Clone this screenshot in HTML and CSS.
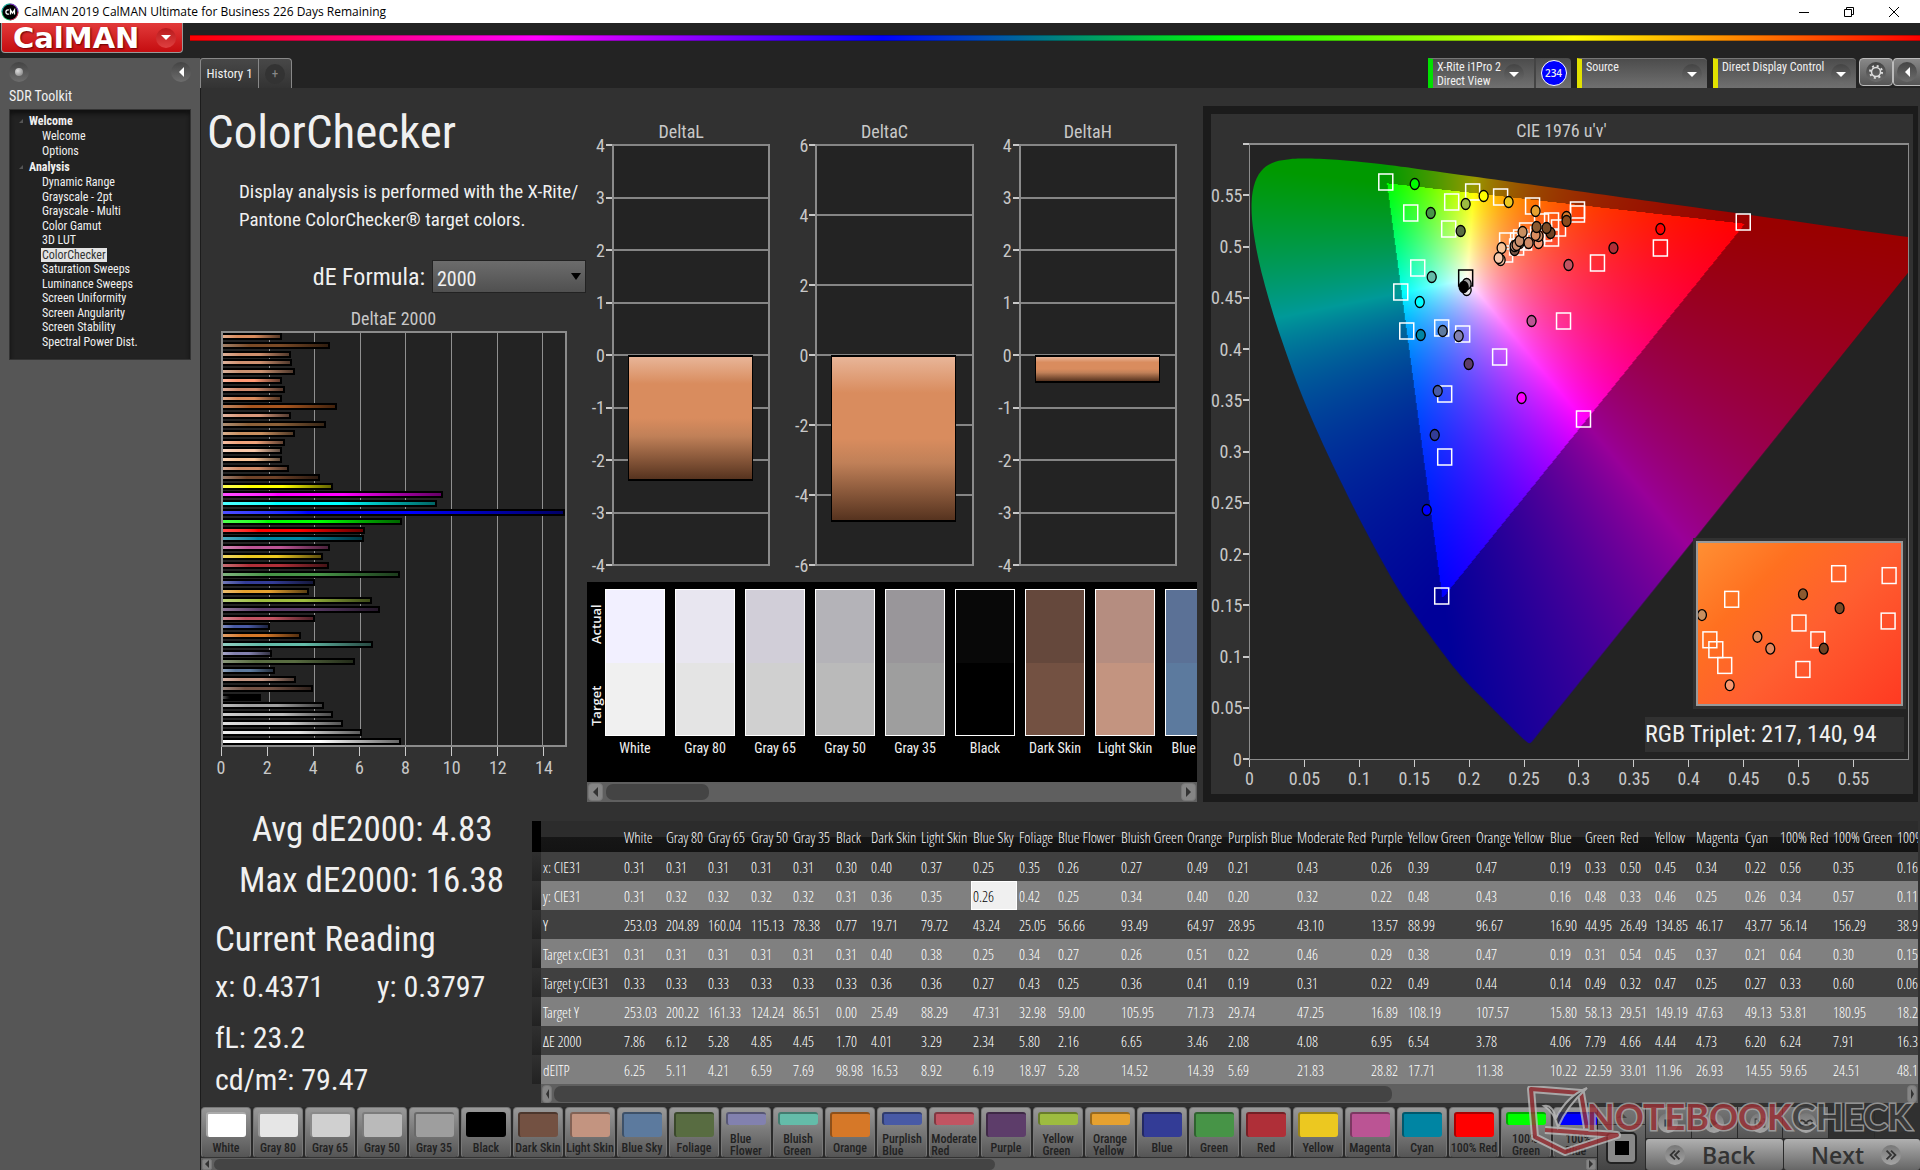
FILE: index.html
```html
<!DOCTYPE html>
<html lang="en">
<head>
<meta charset="utf-8">
<title>CalMAN 2019 CalMAN Ultimate for Business</title>
<link rel="stylesheet" href="styles.css">
</head>
<body>
<header class="titlebar">
  <svg class="app-icon" viewBox="0 0 18 18" aria-hidden="true"><circle cx="9" cy="9" r="8.500" fill="#2b6"/><path d="M9 .5A8.500 8.500 0 0 1 17.500 9L9 9z" fill="#83c"/><path d="M.5 9A8.500 8.500 0 0 1 9 .5V9z" fill="#2aa"/><path d="M17.500 9A8.500 8.500 0 0 1 9 17.500V9z" fill="#c25"/><circle cx="9" cy="9" r="7.500" fill="#000"/><path d="M8 7a2.200 2.200 0 1 0 0 4M9.500 11.500V7l2 3 2-3v4.500" fill="none" stroke="#fff" stroke-width="1.300"/></svg>
  <span class="titlebar-text">CalMAN 2019 CalMAN Ultimate for Business 226 Days Remaining</span>
  <div class="window-buttons">
    <button type="button" aria-label="Minimize"><svg viewBox="0 0 12 12"><path d="M1 6.500h10"/></svg></button>
    <button type="button" aria-label="Restore"><svg viewBox="0 0 12 12"><path d="M1.500 3.500h7v7h-7zM3.500 3.500v-2h7v7h-2"/></svg></button>
    <button type="button" aria-label="Close"><svg viewBox="0 0 12 12"><path d="M1 1l10 10M11 1L1 11"/></svg></button>
  </div>
</header>
<div class="brandbar">
  <button type="button" class="brand">CalMAN<span class="round red"><i class="tri-down"></i></span></button>
  <div class="rainbow"></div>
</div>
<div class="shell">
  <aside class="sidebar">
    <div class="sidebar-tools"><span class="round"><i class="knob"></i></span><button type="button" class="round" aria-label="Collapse"><i class="tri-left"></i></button></div>
    <h2>SDR Toolkit</h2>
    <nav class="tree">
      <h3>Welcome</h3>
      <ul><li><a href="#">Welcome</a></li><li><a href="#">Options</a></li></ul>
      <h3>Analysis</h3>
      <ul>
        <li><a href="#">Dynamic Range</a></li><li><a href="#">Grayscale - 2pt</a></li><li><a href="#">Grayscale - Multi</a></li><li><a href="#">Color Gamut</a></li><li><a href="#">3D LUT</a></li><li><a href="#" class="current">ColorChecker</a></li><li><a href="#">Saturation Sweeps</a></li><li><a href="#">Luminance Sweeps</a></li><li><a href="#">Screen Uniformity</a></li><li><a href="#">Screen Angularity</a></li><li><a href="#">Screen Stability</a></li><li><a href="#">Spectral Power Dist.</a></li>
      </ul>
    </nav>
  </aside>
  <div class="workspace">
    <div class="tabbar">
      <div class="tabs"><button type="button" class="tab">History 1</button><button type="button" class="tab add" aria-label="Add tab"><span class="round dark">+</span></button></div>
      <div class="devices">
        <button type="button" class="device green meter"><span>X-Rite i1Pro 2<br>Direct View</span><span class="round"><i class="tri-down"></i></span></button>
        <span class="badge-cell"><b class="badge">234</b></span>
        <button type="button" class="device yellow source"><span>Source</span><span class="round"><i class="tri-down"></i></span></button>
        <button type="button" class="device yellow display"><span>Direct Display Control</span><span class="round"><i class="tri-down"></i></span></button>
        <div class="device-tools">
          <button type="button" aria-label="Settings"><span class="round"><svg viewBox="0 0 16 16"><circle cx="8" cy="8" r="4.500" fill="none" stroke="#ddd" stroke-width="1.500"/><circle cx="8" cy="8" r="6" fill="none" stroke="#ddd" stroke-width="2" stroke-dasharray="2 2.712"/></svg></span></button>
          <button type="button" aria-label="Collapse panel"><span class="round"><i class="tri-left"></i></span></button>
        </div>
      </div>
    </div>
    <main class="content">
      <div class="upper">
        <section class="intro">
          <h1>ColorChecker</h1>
          <p class="lead">Display analysis is performed with the X-Rite/<br>Pantone ColorChecker® target colors.</p>
          <div class="formula"><label for="de">dE Formula:</label><span class="select"><select id="de"><option>2000</option></select></span></div>
          <h4 class="chart-title">DeltaE 2000</h4>
          <div class="de-plot"><div class="de-grid" id="de-grid"></div><div class="de-bars" id="de-bars"></div></div>
          <div class="de-axis" id="de-axis"></div>
        </section>
        <section class="middle">
          <div class="deltas" id="deltas"></div>
          <div class="strip">
            <div class="strip-sides"><span>Actual</span><span>Target</span></div>
            <div class="strip-items" id="strip"></div>
          </div>
          <div class="scrollbar strip-scroll"><button type="button" aria-label="Scroll left"><i class="tri-left"></i></button><div class="track"><div class="thumb"></div></div><button type="button" aria-label="Scroll right"><i class="tri-right"></i></button></div>
        </section>
        <section class="cie">
          <h4 class="chart-title">CIE 1976 u'v'</h4>
          <div class="cie-body">
            <div class="yaxis" id="cie-y"></div>
            <div class="cie-plot">
              <canvas id="cie-canvas" width="659" height="614"></canvas>
              <svg id="cie-marks" viewBox="0 0 659 614" preserveAspectRatio="none"></svg>
              <div class="inset"><svg id="inset-marks" viewBox="0 0 205 163" preserveAspectRatio="none"></svg></div>
              <div class="triplet">RGB Triplet: 217, 140, 94</div>
            </div>
          </div>
          <div class="xaxis" id="cie-x"></div>
        </section>
      </div>
      <div class="lower">
        <section class="readings">
          <p class="big avg">Avg dE2000: 4.83</p>
          <p class="big max">Max dE2000: 16.38</p>
          <p class="big">Current Reading</p>
          <p class="xy"><span>x: 0.4371</span><span>y: 0.3797</span></p>
          <p class="fl">fL: 23.2</p>
          <p class="cd">cd/m²: 79.47</p>
        </section>
        <section class="data">
          <div class="table-box"><table id="table"></table></div>
          <div class="scrollbar table-scroll"><button type="button" aria-label="Scroll left"><i class="tri-left"></i></button><div class="track"><div class="thumb"></div></div><button type="button" aria-label="Scroll right"><i class="tri-right"></i></button></div>
        </section>
      </div>
      <footer class="toolbar">
        <div class="palette-box">
          <div class="palette" id="palette"></div>
          <div class="scrollbar palette-scroll"><button type="button" aria-label="Scroll left"><i class="tri-left"></i></button><div class="track"><div class="thumb"></div></div><button type="button" aria-label="Scroll right"><i class="tri-right"></i></button></div>
        </div>
        <div class="pattern"><button type="button" class="up" aria-label="Show patterns"><i class="tri-up"></i></button><button type="button" class="window" aria-label="Pattern window"><i></i></button></div>
        <div class="controls">
          <div class="media">
            <button type="button" aria-label="Stop"><span class="round light"><svg viewBox="0 0 18 18"><path d="M5 5h8v8H5z"/></svg></span></button>
            <button type="button" aria-label="Play"><span class="round light"><svg viewBox="0 0 18 18"><path d="M5 4l9 5-9 5z"/></svg></span></button>
            <button type="button" aria-label="Step"><span class="round light"><svg viewBox="0 0 18 18"><path d="M3 4h3v1H4v8h2v1H3zM15 4h-3v1h2v8h-2v1h3zM7 6l5 3-5 3z"/></svg></span></button>
            <button type="button" aria-label="Loop"><span class="round light"><svg viewBox="0 0 18 18"><path d="M9 9C5 4 2 6 2 9s3 5 7 0 7-3 7 0-3 5-7 0z" fill="none" stroke="#333" stroke-width="2"/></svg></span></button>
            <button type="button" class="off" aria-label="Refresh"><span class="round dark"><svg viewBox="0 0 18 18"><path d="M4 9a5 5 0 0 1 9-3M14 9a5 5 0 0 1-9 3" fill="none" stroke="#222" stroke-width="2"/></svg></span></button>
            <button type="button" class="off" aria-label="More"><span class="round dark"></span></button>
          </div>
          <div class="nav">
            <button type="button" class="back"><span class="round light"><svg viewBox="0 0 18 18"><path d="M9 4L4 9l5 5M14 4L9 9l5 5" class="chev"/></svg></span><span>Back</span></button>
            <button type="button" class="next"><span>Next</span><span class="round light"><svg viewBox="0 0 18 18"><path d="M9 4l5 5-5 5M4 4l5 5-5 5" class="chev"/></svg></span></button>
          </div>
        </div>
        <div class="watermark">
          <svg viewBox="0 0 96 72" aria-hidden="true">
            <g fill="none" stroke-linejoin="round"><path d="M60 42L54 7 4 3 8 51 38 66 90 49 18 44" stroke="#bbb" stroke-width="8"/><path d="M60 42L54 7 4 3 8 51 38 66 90 49 18 44" stroke="#9c3136" stroke-width="4"/></g>
            <path d="M17 20q8-2 12 12Q40 10 60 2q-20 18-29 39-4-15-14-21z" fill="#3a3a3a" stroke="#bbb" stroke-width="2"/>
          </svg>
          <span class="wm-red">NOTEBOOK</span><span class="wm-dark">CHECK</span>
        </div>
      </footer>
    </main>
  </div>
</div>
<script src="app.js"></script>
</body>
</html>
```

FILE: styles.css
```css
* { box-sizing: border-box; }
body {
  margin: 0;
  min-height: 100vh;
  display: flex;
  flex-direction: column;
  background: #232323;
  color: #f0f0f0;
  font-family: "Roboto Condensed", Roboto, "Liberation Sans", sans-serif;
  font-size: 13px;
  overflow-x: hidden;
}
h1, h2, h3, h4, p, ul { margin: 0; padding: 0; font-weight: 400; }
ul { list-style: none; }
a { color: inherit; text-decoration: none; }
button { font: inherit; color: inherit; border: 0; padding: 0; margin: 0; background: none; }
svg { display: block; }

/* Small shapes */
.tri-down, .tri-left, .tri-right, .tri-up { width: 0; height: 0; border: 5px solid transparent; }
.tri-down { border-top-color: #fff; border-bottom: 0; }
.tri-up { border-bottom-color: #444; border-top: 0; }
.tri-left { border-right-color: #fff; border-left: 0; }
.tri-right { border-left-color: #333; border-right: 0; }
.round {
  display: flex;
  align-items: center;
  justify-content: center;
  flex: none;
  width: 20px;
  height: 20px;
  border-radius: 50%;
  background: linear-gradient(#444, #6d6d6d);
}
.round svg { width: 16px; height: 16px; }
.round.red { background: linear-gradient(#b81a1c, #e04040); }
.round.dark { background: #333; color: #888; }
.round.light { background: linear-gradient(#777, #a5a5a5); }
.knob { width: 8px; height: 8px; border-radius: 50%; background: radial-gradient(circle at 35% 35%, #ddd, #777); }

/* Window title */
.titlebar { display: flex; align-items: center; height: 23px; background: #fff; color: #000; padding: 0 4px 0 1px; }
.app-icon { width: 18px; height: 18px; }
.titlebar-text { margin-left: 5px; font: 12px/20px "Open Sans", sans-serif; }
.window-buttons { display: flex; margin-left: auto; }
.window-buttons button { width: 45px; height: 20px; display: flex; align-items: center; justify-content: center; }
.window-buttons svg { width: 12px; height: 12px; fill: none; stroke: #000; }

.brandbar { display: flex; height: 35px; }
.brand {
  display: flex;
  align-items: center;
  justify-content: space-between;
  width: 182px;
  height: 30px;
  padding: 0 6px 0 11px;
  margin-left: 1px;
  border: 1px solid #999;
  border-top: 0;
  border-radius: 0 0 4px 4px;
  background: linear-gradient(#e23a3a, #c50d10);
  font: 700 29px/28px "DejaVu Sans", sans-serif;
  color: #fff;
  text-shadow: 1px 1px 2px #600;
}
.rainbow { flex: 1; height: 6px; margin: 12px 0 0 7px; background: linear-gradient(90deg, #f00, #f0f, #00f, #0f0, #ff0, #f00); border: solid #0004; border-width: 1px 0; }

.shell { flex: 1; display: flex; }
.sidebar { width: 200px; flex: none; background: #565656; padding: 4px 9px; }
.sidebar-tools { display: flex; justify-content: space-between; }
.sidebar h2 { font-size: 14px; line-height: 20px; margin-top: 4px; height: 23px; }
.tree { background: #222; border: 1px solid #333; padding: 2px 0 8px; height: 251px; box-shadow: inset 0 4px 4px #111; }
.tree h3 { font-weight: 700; font-size: 12px; line-height: 16px; padding-left: 19px; position: relative; margin-top: 1px; }
.tree h3::before { content: ""; position: absolute; left: 9px; top: 6px; border: 2px solid #555; border-top-color: transparent; border-left-color: transparent; }
.tree li { height: 15px; line-height: 14px; padding-left: 32px; font-size: 12px; }
.tree li:nth-child(even) { height: 14px; }
.tree .current { display: inline-block; padding: 0 1px; margin-left: -1px; background: #e3e3e3; color: #333; }

.workspace { flex: 1; min-width: 0; display: flex; flex-direction: column; }
.tabbar { display: flex; justify-content: space-between; height: 30px; }
.tabs { display: flex; }
.tab { width: 59px; background: linear-gradient(#484848, #333); border: 1px solid #888; border-bottom: 0; font-size: 13px; border-radius: 3px 0 0 0; }
.tab.add { width: 34px; margin-left: -1px; display: flex; align-items: center; justify-content: center; border-radius: 0 4px 0 0; }
.devices { display: flex; }
.device { display: flex; justify-content: space-between; align-items: flex-start; text-align: left; font-size: 12px; line-height: 14px; white-space: nowrap; padding: 1px 5px 0 4px; border-left: 5px solid #e2e200; background: linear-gradient(#4c4c4c, #707070); border-top: 1px solid #777; }
.device .round { margin-top: 4px; }
.device.green { border-left-color: #00e000; }
.meter { width: 106px; padding-right: 10px; }
.source { width: 130px; margin-left: 6px; border-radius: 0 4px 0 0; }
.display { width: 143px; margin-left: 6px; border-radius: 0 4px 0 0; }
.badge-cell { width: 37px; border-left: 2px solid #444; background: linear-gradient(#4c4c4c, #707070); border-radius: 0 4px 0 0; display: flex; align-items: center; justify-content: center; }
.badge { width: 26px; height: 26px; border-radius: 50%; border: 1px solid #fff; background: #00f; font: 600 10px/24px "Open Sans", sans-serif; text-align: center; }
.device-tools { display: flex; margin-left: 3px; }
.device-tools button { width: 34px; height: 28px; border: 1px solid #bbb; border-radius: 4px; background: linear-gradient(#888, #555); display: flex; align-items: center; justify-content: center; }
.device-tools button:last-child { width: 27px; border-right: 0; border-radius: 4px 0 0 4px; }

.content { flex: 1; display: flex; flex-direction: column; background: #313131; border-left: 1px solid #1c1c1c; min-width: 0; }
.upper { flex: 1; display: grid; grid-template-columns: minmax(0, 386fr) minmax(0, 610fr) minmax(0, 723fr); }
.chart-title { font-size: 18px; line-height: 24px; text-align: center; color: #c8c8c8; }

/* Left column */
.intro { display: flex; flex-direction: column; padding: 14px 0 0 20px; }
.intro h1 { font-size: 47px; line-height: 60px; margin-left: -14px; }
.lead { margin: 16px 0 0 18px; font-size: 19px; line-height: 28px; white-space: nowrap; }
.formula { display: flex; justify-content: flex-end; align-items: center; margin: 26px 1px 0 0; gap: 7px; font-size: 24px; }
.select { position: relative; width: 154px; }
.select::after { content: ""; position: absolute; right: 5px; top: 13px; border: 5px solid transparent; border-top: 7px solid #000; border-bottom: 0; pointer-events: none; }
.select select { appearance: none; display: block; width: 100%; height: 33px; padding: 4px 4px 0; border: 1px solid #222; border-radius: 0; background: linear-gradient(#6c6c6c, #505050); color: #f0f0f0; font: inherit; font-size: 20px; line-height: 24px; }
.intro .chart-title { margin: 14px 21px 0 0; }
.de-plot { flex: 1; min-height: 300px; margin-right: 20px; display: grid; border: 2px solid #8b8b8b; background: #232323; }
.de-grid, .de-bars { grid-area: 1 / 1; }
.de-grid { display: grid; grid-template-columns: repeat(7, 2fr) 1fr; }
.de-grid i + i { border-left: 1px solid #909090; }
.de-bars { display: flex; flex-direction: column; justify-content: space-between; z-index: 1; }
.de-bars i { height: 7px; border: solid #000; border-width: 2px 2px 2px 0; }
.de-axis { display: grid; grid-template-columns: repeat(7, 2fr) 1fr; height: 59px; margin: 0 21px 0 -1px; font-size: 18px; line-height: 24px; color: #c8c8c8; }
.de-axis span { display: flex; flex-direction: column; align-items: center; width: 2px; }
.de-axis span::before { content: ""; width: 1px; height: 9px; flex: none; background: #ccc; }

/* Delta charts */
.middle { display: flex; flex-direction: column; padding-bottom: 4px; min-width: 0; }
.deltas { flex: 1; display: grid; grid-template-columns: repeat(3, 1fr); padding: 32px 0 16px; }
.delta { display: flex; flex-direction: column; padding-right: 20px; }
.delta .chart-title { margin-left: 5px; }
.delta-body { flex: 1; display: flex; }
.yaxis { display: flex; flex-direction: column; justify-content: space-between; color: #c8c8c8; font-size: 18px; }
.yaxis span { display: flex; align-items: center; justify-content: flex-end; height: 2px; gap: 1px; white-space: nowrap; }
.yaxis span::after { content: ""; width: 6px; height: 2px; background: #c8c8c8; }
.delta .yaxis { width: 25px; }
.delta-plot { flex: 1; position: relative; display: flex; flex-direction: column; justify-content: space-between; background: #232323; border: solid #8b8b8b; border-width: 0 2px; }
.delta-plot i { height: 2px; background: #858585; }
.delta-bar { position: absolute; left: 9%; right: 10%; top: 50%; border: 1px solid #000; border-width: 2px 1px; background: linear-gradient(#e8b598, #d98c5e 22%, #d98c5e 50%, #c08058 65%, #56331f); }

.strip { display: flex; height: 200px; background: #000; overflow: hidden; }
.strip-sides { flex: none; width: 18px; display: flex; flex-direction: column; padding-top: 4px; font: 600 13px/18px "Open Sans", sans-serif; }
.strip-sides span { writing-mode: vertical-rl; transform: rotate(180deg); height: 77px; text-align: center; }
.strip-sides span + span { margin-top: 4px; }
.strip-items { display: flex; gap: 10px; padding: 7px 0 0; }
.strip-item { width: 60px; flex: none; text-align: center; font-size: 14px; line-height: 24px; white-space: nowrap; }
.strip-item div { height: 147px; border: 1px solid #fff; display: flex; flex-direction: column; }
.strip-item div i { flex: 1; }

.scrollbar { display: flex; align-items: center; height: 20px; padding: 0 1px; gap: 3px; background: #5f5f5f; }
.scrollbar button { width: 15px; height: 18px; border-radius: 4px; border: 1px solid #777; background: #858585; display: flex; align-items: center; justify-content: center; }
.scrollbar .tri-left { border-right-color: #333; }
.track { flex: 1; height: 16px; }
.thumb { height: 100%; border-radius: 7px; background: #444; }
.strip-scroll .thumb { width: 18%; }

/* CIE chart */
.cie { display: flex; flex-direction: column; margin: 18px 2px 4px 6px; border: solid #1b1b1b; border-width: 8px 5px 8px 8px; padding: 5px 4px 0 0; min-width: 0; }
.cie .chart-title { margin-left: 3px; }
.cie-body { flex: 1; display: flex; }
.cie .yaxis { width: 38px; }
.cie-plot { position: relative; flex: 1; min-height: 400px; border: 1px solid #8b8b8b; border-top-width: 2px; background: #232323; overflow: hidden; }
.cie-plot canvas, .cie-plot > svg { position: absolute; left: 0; top: 0; width: 100%; height: 100%; }
.inset { position: absolute; right: 5px; bottom: 53px; width: 207px; height: 165px; border: 2px solid #999; outline: 3px solid #313131; background: linear-gradient(135deg, #ff8f33, #ff7020 28%, #ff5f30 55%, #ff3a22); }
.inset svg { width: 100%; height: 100%; }
.triplet { position: absolute; right: 4px; bottom: 7px; width: 259px; height: 35px; line-height: 35px; background: #313131; font-size: 24px; color: #f0f0f0; }
.xaxis { display: flex; justify-content: space-between; height: 34px; margin-left: 38px; font-size: 18px; line-height: 24px; color: #c8c8c8; }
.xaxis span { display: flex; flex-direction: column; align-items: center; width: 1px; }
.xaxis span::before { content: ""; width: 1px; height: 7px; flex: none; background: #ccc; }
.xaxis span:empty::before { visibility: hidden; }

/* Readings and table */
.lower { display: flex; margin-top: 15px; }
.readings { width: 331px; flex: none; padding-left: 14px; font-size: 30px; white-space: nowrap; }
.readings .big { font-size: 35px; line-height: 40px; }
.readings .avg { padding-left: 37px; margin: -11px 0 11px; }
.readings .max { padding-left: 24px; margin-bottom: 19px; }
.readings .xy { display: flex; gap: 53px; line-height: 36px; margin-top: 9px; }
.readings .fl { line-height: 36px; margin-top: 15px; }
.readings .cd { line-height: 36px; margin-top: 6px; }
.data { flex: 1; min-width: 0; padding-right: 2px; }
.table-box { overflow: hidden; }
table { table-layout: fixed; border-collapse: collapse; width: 1430px; font-family: "Open Sans Condensed Light", "Roboto Condensed", sans-serif; font-size: 15px; color: #fff; }
th, td { padding: 0 0 0 2px; text-align: left; font-weight: 400; white-space: nowrap; height: 29px; overflow: hidden; }
thead th { height: 31px; background: linear-gradient(#2c2c2c 50%, #161616 50%, #131313); }
thead td { background: #000; }
tbody tr { background: #404040; }
tbody tr:nth-child(even) { background: #808080; }
tbody .grip { background: linear-gradient(#303030, #222); }
td.active { background: #f0f0f0; color: #000; box-shadow: inset 0 0 0 1px #fff; }
.table-scroll { margin-left: 9px; height: 19px; gap: 2px; }
.table-scroll button { width: 10px; }
.table-scroll .thumb { width: 62%; }
.table-scroll .tri-left { border-width: 5px 3px 5px 0; }
.table-scroll .tri-right { border-width: 5px 0 5px 3px; }

/* Bottom toolbar */
.toolbar { position: relative; display: flex; height: 63px; margin-top: 4px; background: #2a2a2a; }
.palette-box { flex: 1; min-width: 0; }
.palette { display: flex; gap: 2px; height: 51px; overflow: hidden; }
.palette button { width: 50px; flex: none; border: 1px solid #777; border-bottom-color: #333; border-radius: 4px; background: linear-gradient(#999, #555); display: flex; flex-direction: column; align-items: center; justify-content: space-between; padding: 4px 0 0; font-size: 12px; line-height: 12px; font-weight: 500; color: #222; }
.palette button span { min-height: 15px; white-space: pre-line; text-align: left; }
.palette i { width: 40px; height: 25px; border-radius: 3px; border: solid #0005; border-width: 2px 0 0 2px; }
.palette .two i { height: 13px; }
.palette-scroll { height: 12px; gap: 2px; }
.palette-scroll button { width: 10px; height: 11px; border-radius: 2px; }
.palette-scroll .track { height: 11px; }
.palette-scroll .thumb { width: 57%; }
.palette-scroll .tri-left { border-width: 4px 4px 4px 0; }
.palette-scroll .tri-right { border-width: 4px 0 4px 4px; }
.pattern { width: 48px; display: flex; flex-direction: column; align-items: center; background: linear-gradient(#777, #444); border-left: 1px solid #222; }
.pattern .up { width: 100%; height: 18px; display: flex; align-items: center; justify-content: center; border-bottom: 1px solid #333; }
.pattern .window { width: 31px; height: 32px; margin-top: 7px; border: 2px solid #222; border-radius: 5px; background: #888; display: flex; align-items: center; justify-content: center; }
.pattern .window i { width: 14px; height: 14px; background: #000; }
.controls { width: 274px; margin-left: 1px; display: flex; flex-direction: column; gap: 1px; }
.media { display: flex; gap: 1px; height: 31px; }
.media button { flex: 1; background: linear-gradient(#777, #555); display: flex; align-items: center; justify-content: center; }
.media .off { background: #303030; }
.media svg { fill: #333; }
.nav { display: flex; gap: 1px; flex: 1; }
.nav button { flex: 1; display: flex; align-items: center; gap: 17px; padding: 0 19px; background: linear-gradient(#b0b0b0, #666); color: #333; border-radius: 3px; font: 600 23px/28px "Open Sans", sans-serif; }
.nav .next { justify-content: flex-end; }
.chev { fill: none; stroke: #333; stroke-width: 2; }
.watermark { position: absolute; right: 8px; bottom: 12px; display: flex; align-items: center; opacity: .8; font: 700 36px/40px Lato, sans-serif; pointer-events: none; }
.watermark svg { width: 96px; height: 72px; margin-right: -36px; }
.wm-red, .wm-dark { -webkit-text-stroke: 3px #aaa; paint-order: stroke fill; padding-bottom: 12px; }
.wm-red { color: #9c3136; }
.wm-dark { color: #3a3a3a; }
```

FILE: app.js
```js
const $ = id => document.getElementById(id);

// DeltaE bars, top to bottom: value, colour
const deltaE = [[2.57,'#d98c5e'],[4.7,'#7a4a26'],[3,'#cf8f6d'],[3.04,'#cd9070'],[3.17,'#c99070'],[2.6,'#ff9a76'],[2.74,'#d08c6e'],[2.6,'#d98c5e'],[5,'#a8561f'],[3,'#d8987a'],[4.52,'#8c6038'],[3.17,'#c98f5f'],[2.7,'#f0a27a'],[2.6,'#f8c8aa'],[2.6,'#f9c59a'],[2.9,'#d08c68'],[4.26,'#6f4228'],[4.83,'#ffff00'],[9.65,'#ff00ff'],[9.4,'#00ffff'],[15.4,'#0000ff'],[7.87,'#00ff00'],[6.22,'#ff0000'],[6.18,'#0085a3'],[4.7,'#bb5494'],[4.4,'#ecc820'],[4.65,'#af2f38'],[7.75,'#479447'],[4.04,'#333c96'],[3.78,'#e6a12f'],[6.52,'#9dbc40'],[6.9,'#5d3d6a'],[4.04,'#c15462'],[2.08,'#485aa6'],[3.43,'#d67828'],[6.6,'#64bca9'],[2.13,'#8281af'],[5.78,'#586c41'],[2.3,'#5e7a9e'],[3.2,'#c39582'],[3.95,'#735244'],[1.65,'#000000'],[4.43,'#a0a0a0'],[4.83,'#bcbcbc'],[5.26,'#d2d2d2'],[6.1,'#e6e6e6'],[7.82,'#ffffff']];
$('de-bars').innerHTML = deltaE.map(([v, c]) =>
  `<i style="width:${Math.min(v / 15 * 100, 100)}%;background:linear-gradient(90deg,color-mix(in srgb,${c} 70%,#fff),${c} 25%,${c} 55%,color-mix(in srgb,${c} 40%,#000))"></i>`).join('');
$('de-grid').innerHTML = '<i></i>'.repeat(8);
$('de-axis').innerHTML = [0,2,4,6,8,10,12,14].map(v => `<span>${v}</span>`).join('');

// Delta L / C / H
const steps = (top, step) => { const a = []; for (let v = top; v >= -top; v -= step) a.push(v); return a; };
$('deltas').innerHTML = [['DeltaL',4,1,2.38],['DeltaC',6,2,4.76],['DeltaH',4,1,.53]].map(([name, top, step, v]) => {
  const s = steps(top, step);
  return `<div class="delta"><h4 class="chart-title">${name}</h4><div class="delta-body"><div class="yaxis">${s.map(n => `<span>${n}</span>`).join('')}</div><div class="delta-plot">${'<i></i>'.repeat(s.length)}<div class="delta-bar" style="height:${v / top * 50}%"></div></div></div></div>`;
}).join('');

// Actual / target strip
$('strip').innerHTML = [['White','#f2f0ff','#f0f0f0'],['Gray 80','#e8e6f0','#e4e4e4'],['Gray 65','#d1ced8','#d0d0d0'],['Gray 50','#b4b3b8','#bababa'],['Gray 35','#99969a','#9e9e9e'],['Black','#080808','#000'],['Dark Skin','#65483c','#735142'],['Light Skin','#b58d80','#c39480'],['Blue Sky','#5b7196','#5c7a9e']].map(([n, a, t]) =>
  `<div class="strip-item"><div><i style="background:${a}"></i><i style="background:${t}"></i></div>${n}</div>`).join('');

// CIE axes
$('cie-y').innerHTML = ['','0.55','0.5','0.45','0.4','0.35','0.3','0.25','0.2','0.15','0.1','0.05','0'].map(v => `<span>${v}</span>`).join('');
$('cie-x').innerHTML = ['0','0.05','0.1','0.15','0.2','0.25','0.3','0.35','0.4','0.45','0.5','0.55',''].map(v => `<span>${v}</span>`).join('');

// CIE 1976 diagram: spectral locus filled with the brightest colour of each chromaticity
(function drawCie() {
  const canvas = $('cie-canvas'), ctx = canvas.getContext('2d'), W = canvas.width, H = canvas.height;
  const locus = [[.1741,.005],[.1714,.0051],[.1644,.0109],[.1566,.0177],[.144,.0297],[.1241,.0578],[.1096,.0868],[.0913,.1327],[.0687,.2007],[.0454,.295],[.0235,.4127],[.0082,.5384],[.0039,.6548],[.0139,.7502],[.0389,.812],[.0743,.8338],[.1142,.8262],[.1547,.8059],[.2296,.7543],[.3016,.6923],[.3731,.6245],[.5125,.4866],[.627,.3725],[.6915,.3083],[.7347,.2653]];
  const px = ([x, y]) => { const d = -2 * x + 12 * y + 3; return [4 * x / d / .6 * W, H - 9 * y / d / .6 * H]; };
  const img = ctx.createImageData(W, H);
  for (let j = 0; j < H; j++) for (let i = 0; i < W; i++) {
    const u = (i + .5) / W * .6, v = (H - j - .5) / H * .6, d = 6 * u - 16 * v + 12;
    const x = 9 * u / d, y = 4 * v / d, z = 1 - x - y;
    const rgb = [3.2406 * x - 1.5372 * y - .4986 * z, -.9689 * x + 1.8758 * y + .0415 * z, .0557 * x - .204 * y + 1.057 * z];
    const k = Math.min(...rgb) >= -.0005 ? 255 : 153, m = Math.max(...rgb), o = (j * W + i) * 4;
    for (let n = 0; n < 3; n++) img.data[o + n] = k * Math.max(rgb[n], 0) / m;
    img.data[o + 3] = 255;
  }
  const tmp = document.createElement('canvas'); tmp.width = W; tmp.height = H;
  tmp.getContext('2d').putImageData(img, 0, 0);
  const p = locus.map(px), at = n => p[Math.max(0, Math.min(p.length - 1, n))];
  ctx.beginPath(); ctx.moveTo(...p[0]);
  for (let n = 0; n < p.length - 1; n++) {
    const a = at(n - 1), b = at(n), c = at(n + 1), d = at(n + 2);
    ctx.bezierCurveTo(b[0] + (c[0] - a[0]) / 6, b[1] + (c[1] - a[1]) / 6, c[0] - (d[0] - b[0]) / 6, c[1] - (d[1] - b[1]) / 6, c[0], c[1]);
  }
  ctx.closePath(); ctx.clip(); ctx.drawImage(tmp, 0, 0);
})();

const sq = ([x, y, c]) => `<rect x="${x - 7}" y="${y - 8}" width="14" height="16" fill="none" stroke="${c || '#fff'}" stroke-width="1.500"/>`;
const dot = ([x, y, c]) => `<ellipse cx="${x}" cy="${y}" rx="4.500" ry="5.500" fill="${c}" stroke="#000" stroke-width="1.300"/>`;
$('cie-marks').innerHTML = [[136,37],[223,47],[251,52],[283,61],[202,57],[161,68],[199,84],[328,65],[328,69],[494,77],[411,103],[348,118],[168,123],[151,147],[157,186],[192,183],[213,189],[250,212],[314,176],[195,249],[334,274],[195,312],[192,451],[257,96],[256,109],[292,77],[302,76],[309,83],[302,93],[277,86],[271,93],[268,96],[267,102],[275,97],[295,88],[288,90]].map(sq).join('')
 + sq([216,133,'#000'])
 + [[165,39,'#00ff00'],[216,59,'#9dbc40'],[234,51,'#ffff00'],[259,57,'#ecc820'],[286,66,'#e6a12f'],[181,68,'#479447'],[211,86,'#586c41'],[317,72,'#d67828'],[317,76,'#8b4a1c'],[411,84,'#ff0000'],[364,103,'#af2f38'],[319,120,'#c15462'],[182,132,'#64bca9'],[170,157,'#00ffff'],[171,190,'#0085a3'],[193,186,'#5e7a9e'],[209,191,'#8281af'],[282,176,'#bb5494'],[219,219,'#5d3d6a'],[272,253,'#ff00ff'],[188,246,'#485aa6'],[185,290,'#333c96'],[177,365,'#0000ff'],[265,105,'#735244'],[252,103,'#f9c59a'],[251,115,'#f3c0a0'],[249,113,'#f8c8aa'],[265,101,'#c39582'],[270,98,'#d8987a'],[267,100,'#cf8f6d'],[270,96,'#c98f6d'],[273,87,'#c98f5f'],[279,98,'#d08c68'],[289,98,'#f79871'],[289,91,'#d08c68'],[286,90,'#d98c5e'],[287,82,'#8c5a30'],[301,88,'#6f4224'],[297,83,'#7a4a26'],[217,145,'#e6e6e6'],[217,139,'#a0a0a0'],[214,142,'#000']].map(dot).join('');
$('inset-marks').innerHTML = [[142,31],[193,33],[34,57],[102,81],[192,79],[12,98],[121,98],[18,108],[27,124],[106,128]].map(sq).join('')
 + [[106,52,'#8c5a30'],[143,66,'#7a4a26'],[4,73,'#c98f5f'],[60,95,'#d98c5e'],[73,107,'#e08860'],[127,107,'#6f4224'],[32,144,'#f79871']].map(dot).join('');

// Reading table
const cols = [['White',42],['Gray 80',42],['Gray 65',43],['Gray 50',42],['Gray 35',43],['Black',35],['Dark Skin',50],['Light Skin',52],['Blue Sky',46],['Foliage',39],['Blue Flower',63],['Bluish Green',66],['Orange',41],['Purplish Blue',69],['Moderate Red',74],['Purple',37],['Yellow Green',68],['Orange Yellow',74],['Blue',35],['Green',35],['Red',35],['Yellow',41],['Magenta',49],['Cyan',35],['100% Red',53],['100% Green',64],['100% Blue',67]];
const rows = [
  ['x: CIE31','0.31 0.31 0.31 0.31 0.31 0.30 0.40 0.37 0.25 0.35 0.26 0.27 0.49 0.21 0.43 0.26 0.39 0.47 0.19 0.33 0.50 0.45 0.34 0.22 0.56 0.35 0.16'],
  ['y: CIE31','0.31 0.32 0.32 0.32 0.32 0.31 0.36 0.35 0.26 0.42 0.25 0.34 0.40 0.20 0.32 0.22 0.48 0.43 0.16 0.48 0.33 0.46 0.25 0.26 0.34 0.57 0.11'],
  ['Y','253.03 204.89 160.04 115.13 78.38 0.77 19.71 79.72 43.24 25.05 56.66 93.49 64.97 28.95 43.10 13.57 88.99 96.67 16.90 44.95 26.49 134.85 46.17 43.77 56.14 156.29 38.9'],
  ['Target x:CIE31','0.31 0.31 0.31 0.31 0.31 0.31 0.40 0.38 0.25 0.34 0.27 0.26 0.51 0.22 0.46 0.29 0.38 0.47 0.19 0.31 0.54 0.45 0.37 0.21 0.64 0.30 0.15'],
  ['Target y:CIE31','0.33 0.33 0.33 0.33 0.33 0.33 0.36 0.36 0.27 0.43 0.25 0.36 0.41 0.19 0.31 0.22 0.49 0.44 0.14 0.49 0.32 0.47 0.25 0.27 0.33 0.60 0.06'],
  ['Target Y','253.03 200.22 161.33 124.24 86.51 0.00 25.49 88.29 47.31 32.98 59.00 105.95 71.73 29.74 47.25 16.89 108.19 107.57 15.80 58.13 29.51 149.19 47.63 49.13 53.81 180.95 18.2'],
  ['ΔE 2000','7.86 6.12 5.28 4.85 4.45 1.70 4.01 3.29 2.34 5.80 2.16 6.65 3.46 2.08 4.08 6.95 6.54 3.78 4.06 7.79 4.66 4.44 4.73 6.20 6.24 7.91 16.3'],
  ['dEITP','6.25 5.11 4.21 6.59 7.69 98.98 16.53 8.92 6.19 18.97 5.28 14.52 14.39 5.69 21.83 28.82 17.71 11.38 10.22 22.59 33.01 11.96 26.93 14.55 59.65 24.51 48.1']
];
$('table').innerHTML = `<colgroup><col style="width:9px"><col style="width:81px">${cols.map(c => `<col style="width:${c[1]}px">`).join('')}</colgroup>`
 + `<thead><tr><td></td><th></th>${cols.map(c => `<th scope="col">${c[0]}</th>`).join('')}</tr></thead><tbody>`
 + rows.map(([n, v], r) => `<tr><td class="grip"></td><th scope="row">${n}</th>${v.split(' ').map((t, c) => `<td${r === 1 && c === 8 ? ' class="active"' : ''}>${t}</td>`).join('')}</tr>`).join('') + '</tbody>';

// Patch palette
const palette = [['White','#fff'],['Gray 80','#e6e6e6'],['Gray 65','#d0d0d0'],['Gray 50','#bababa'],['Gray 35','#9e9e9e'],['Black','#000'],['Dark Skin','#735142'],['Light Skin','#c39480'],['Blue Sky','#5c7a9e'],['Foliage','#586c41'],['Blue\nFlower','#8281af'],['Bluish\nGreen','#64bca9'],['Orange','#d67828'],['Purplish\nBlue','#485aa6'],['Moderate\nRed','#c15462'],['Purple','#5d3d6a'],['Yellow\nGreen','#9dbc40'],['Orange\nYellow','#e6a12f'],['Blue','#333c96'],['Green','#479447'],['Red','#af2f38'],['Yellow','#ecc820'],['Magenta','#bb5494'],['Cyan','#0085a3'],['100% Red','#f00'],['100%\nGreen','#0f0'],['100%\nBlue','#00f']];
$('palette').innerHTML = palette.map(([n, c]) => `<button type="button"${n.includes('\n') ? ' class="two"' : ''}><i style="background:${c}"></i><span>${n}</span></button>`).join('');
```
